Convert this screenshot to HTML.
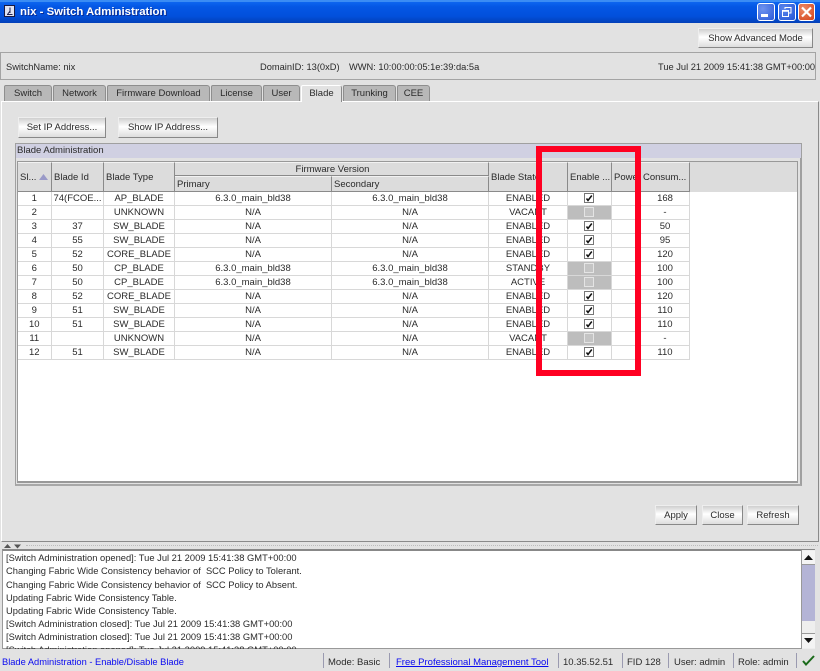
<!DOCTYPE html>
<html><head><meta charset="utf-8"><style>
html,body{margin:0;padding:0}
body{width:820px;height:671px;overflow:hidden;position:relative;background:#e2e2e2;font:9.5px "Liberation Sans",Arial,sans-serif;color:#2a2a2a}
.a{position:absolute;white-space:nowrap;box-sizing:border-box}
.btn{position:absolute;box-sizing:border-box;text-align:center;background:linear-gradient(#cfcfcf,#fff 45%,#ddd);border-top:1px solid #eee;border-left:1px solid #eee;border-right:1px solid #888;border-bottom:1px solid #888;line-height:20px;white-space:nowrap}
.tab{position:absolute;top:85px;height:16px;box-sizing:border-box;background:#b8b8b8;border:1px solid #8e8e8e;border-bottom:0;border-radius:2px 3px 0 0;text-align:center;line-height:16px;white-space:nowrap;color:#2a2a2a}
.tab.on{background:#e2e2e2;border-color:#fff;border-right-color:#888;top:85px;height:17px;z-index:3}
.h{position:absolute;box-sizing:border-box;background:#dcdcdc;border-right:1px solid #8a8a8a;border-bottom:1px solid #8a8a8a;border-top:1px solid #f2f2f2;padding-left:2px;white-space:nowrap;overflow:hidden}
table{position:absolute;left:17.500px;top:191.500px;border-collapse:collapse;table-layout:fixed;width:672px;background:#fff}
td{padding:1px 0 0;border-right:1px solid #d8d8d8;border-bottom:1px solid #d8d8d8;text-align:center;line-height:12px;white-space:nowrap;overflow:hidden;color:#2a2a2a;vertical-align:top}
tr{height:14px}
td.g{background:#bdbdbd}
.c{display:block;width:10px;height:10px;margin:0 auto;box-sizing:border-box;border:1px solid #777;background:#fff;position:relative;left:-1px}
.c svg{position:absolute;left:0;top:0}
.g .c{background:#c4c4c4;border-color:#e4e4e4}
.log{position:absolute;left:6px;white-space:nowrap;line-height:13px;color:#2a2a2a;font-size:9.35px}
.st{position:absolute;top:656px;white-space:nowrap;line-height:13px}
.sp{position:absolute;top:653px;width:1px;height:15px;background:#9a9ab0}
.i{position:absolute;top:61px;line-height:13px;white-space:nowrap;font-size:9.3px}
</style></head><body>

<div class="a" style="left:0;top:0;width:820px;height:23px;background:linear-gradient(#0a5ae0 0,#0d66f0 8%,#0456e4 30%,#0250dc 70%,#0340b8 100%)"></div>
<div class="a" style="left:0;top:0;width:820px;height:2px;background:#3a8cf4"></div>
<svg class="a" style="left:4px;top:5px" width="12" height="13" viewBox="0 0 12 13"><rect x=".5" y=".5" width="10" height="11" fill="#dfe3f2" stroke="#1a1a40"/><path d="M6 2.500V8M3 9.500H8.500M3.500 9.500L6 6" stroke="#222250" fill="none"/></svg>
<div class="a" style="left:20px;top:5px;font:bold 11.4px/15px 'Liberation Sans',sans-serif;color:#fff;text-shadow:1px 1px 0 #0a2a90">nix - Switch Administration</div>
<div class="a" style="left:757px;top:3px;width:18px;height:18px;background:radial-gradient(circle at 30% 30%,#6f93ef,#2c5ad8);border:1px solid #fff;border-radius:3px"></div>
<div class="a" style="left:761px;top:14px;width:7px;height:3px;background:#fff"></div>
<div class="a" style="left:778px;top:3px;width:18px;height:18px;background:radial-gradient(circle at 30% 30%,#5c86ec,#2455d6);border:1px solid #fff;border-radius:3px"></div>
<svg class="a" style="left:778px;top:3px" width="18" height="18"><path d="M7 6V4.500H13V10H11M4.500 7.500H10.500V13.500H4.500Z M4.500 8.200H10.500" stroke="#fff" fill="none"/></svg>
<div class="a" style="left:798px;top:3px;width:17px;height:18px;background:radial-gradient(circle at 30% 30%,#ec8a66,#d4431a);border:1px solid #fff;border-radius:3px"></div>
<svg class="a" style="left:798px;top:3px" width="17" height="18"><path d="M4 4.500L13 13.500M13 4.500L4 13.500" stroke="#fff" stroke-width="2.200" fill="none"/></svg>

<div class="btn" style="left:698px;top:28px;width:115px;height:20px">Show Advanced Mode</div>

<div class="a" style="left:0;top:52px;width:816px;height:28px;border:1px solid #a4a4a4"></div>
<div class="i" style="left:6px">SwitchName: nix</div>
<div class="i" style="left:260px">DomainID: 13(0xD)</div>
<div class="i" style="left:349px">WWN: 10:00:00:05:1e:39:da:5a</div>
<div class="i" style="left:658px">Tue Jul 21 2009 15:41:38 GMT+00:00</div>

<div class="tab" style="left:4px;width:48px">Switch</div>
<div class="tab" style="left:53px;width:53px">Network</div>
<div class="tab" style="left:107px;width:103px">Firmware Download</div>
<div class="tab" style="left:211px;width:51px">License</div>
<div class="tab" style="left:263px;width:37px">User</div>
<div class="tab on" style="left:301px;width:41px">Blade</div>
<div class="tab" style="left:343px;width:53px">Trunking</div>
<div class="tab" style="left:397px;width:33px">CEE</div>

<div class="a" style="left:1px;top:101px;width:818px;height:441px;border-top:1px solid #fff;border-left:1px solid #fff;border-right:1px solid #8a8a8a;border-bottom:1px solid #8a8a8a"></div>

<div class="btn" style="left:18px;top:117px;width:88px;height:21px">Set IP Address...</div>
<div class="btn" style="left:118px;top:117px;width:100px;height:21px">Show IP Address...</div>

<div class="a" style="left:15px;top:143px;width:787px;height:343px;border:1px solid #a0a0a0;border-right:2px solid #a0a0a0;border-bottom:2px solid #a8a8a8"></div>
<div class="a" style="left:16px;top:144px;width:785px;height:14px;background:#d0d0e2;padding-left:1px;line-height:14px">Blade Administration</div>
<div class="a" style="left:17px;top:161px;width:781px;height:322px;background:#fff;border:1px solid #999;border-width:1px 1px 2px 1px"></div>
<div class="a" style="left:18px;top:162px;width:779px;height:30px;background:#dcdcdc"></div>

<div class="h" style="left:18px;top:162px;width:34px;height:30px;line-height:30px">Sl...<svg style="position:absolute;left:21px;top:11px" width="9" height="6"><path d="M4.500 0L9 6H0Z" fill="#9a9ac8"/></svg></div>
<div class="h" style="left:52px;top:162px;width:52px;height:30px;line-height:30px">Blade Id</div>
<div class="h" style="left:104px;top:162px;width:71px;height:30px;line-height:30px">Blade Type</div>
<div class="h" style="left:175px;top:162px;width:314px;height:14px;line-height:14px;text-align:center">Firmware Version</div>
<div class="h" style="left:175px;top:176px;width:157px;height:16px;line-height:16px">Primary</div>
<div class="h" style="left:332px;top:176px;width:157px;height:16px;line-height:16px">Secondary</div>
<div class="h" style="left:489px;top:162px;width:79px;height:30px;line-height:30px">Blade State</div>
<div class="h" style="left:568px;top:162px;width:44px;height:30px;line-height:30px">Enable ...</div>
<div class="h" style="left:612px;top:162px;width:29px;height:30px;line-height:30px">Power</div>
<div class="h" style="left:641px;top:162px;width:49px;height:30px;line-height:30px">Consum...</div>

<table><colgroup><col style="width:34px"><col style="width:52px"><col style="width:71px"><col style="width:157px"><col style="width:157px"><col style="width:79px"><col style="width:44px"><col style="width:29px"><col style="width:49px"></colgroup>
<tr><td>1</td><td>74(FCOE...</td><td>AP_BLADE</td><td>6.3.0_main_bld38</td><td>6.3.0_main_bld38</td><td>ENABLED</td><td><span class="c"><svg width="8" height="8"><path d="M1.500 4.500L3 6.500L6.800 1.500" stroke="#111" stroke-width="1.500" fill="none"/></svg></span></td><td></td><td>168</td></tr>
<tr><td>2</td><td></td><td>UNKNOWN</td><td>N/A</td><td>N/A</td><td>VACANT</td><td class="g"><span class="c"></span></td><td></td><td>-</td></tr>
<tr><td>3</td><td>37</td><td>SW_BLADE</td><td>N/A</td><td>N/A</td><td>ENABLED</td><td><span class="c"><svg width="8" height="8"><path d="M1.500 4.500L3 6.500L6.800 1.500" stroke="#111" stroke-width="1.500" fill="none"/></svg></span></td><td></td><td>50</td></tr>
<tr><td>4</td><td>55</td><td>SW_BLADE</td><td>N/A</td><td>N/A</td><td>ENABLED</td><td><span class="c"><svg width="8" height="8"><path d="M1.500 4.500L3 6.500L6.800 1.500" stroke="#111" stroke-width="1.500" fill="none"/></svg></span></td><td></td><td>95</td></tr>
<tr><td>5</td><td>52</td><td>CORE_BLADE</td><td>N/A</td><td>N/A</td><td>ENABLED</td><td><span class="c"><svg width="8" height="8"><path d="M1.500 4.500L3 6.500L6.800 1.500" stroke="#111" stroke-width="1.500" fill="none"/></svg></span></td><td></td><td>120</td></tr>
<tr><td>6</td><td>50</td><td>CP_BLADE</td><td>6.3.0_main_bld38</td><td>6.3.0_main_bld38</td><td>STANDBY</td><td class="g"><span class="c"></span></td><td></td><td>100</td></tr>
<tr><td>7</td><td>50</td><td>CP_BLADE</td><td>6.3.0_main_bld38</td><td>6.3.0_main_bld38</td><td>ACTIVE</td><td class="g"><span class="c"></span></td><td></td><td>100</td></tr>
<tr><td>8</td><td>52</td><td>CORE_BLADE</td><td>N/A</td><td>N/A</td><td>ENABLED</td><td><span class="c"><svg width="8" height="8"><path d="M1.500 4.500L3 6.500L6.800 1.500" stroke="#111" stroke-width="1.500" fill="none"/></svg></span></td><td></td><td>120</td></tr>
<tr><td>9</td><td>51</td><td>SW_BLADE</td><td>N/A</td><td>N/A</td><td>ENABLED</td><td><span class="c"><svg width="8" height="8"><path d="M1.500 4.500L3 6.500L6.800 1.500" stroke="#111" stroke-width="1.500" fill="none"/></svg></span></td><td></td><td>110</td></tr>
<tr><td>10</td><td>51</td><td>SW_BLADE</td><td>N/A</td><td>N/A</td><td>ENABLED</td><td><span class="c"><svg width="8" height="8"><path d="M1.500 4.500L3 6.500L6.800 1.500" stroke="#111" stroke-width="1.500" fill="none"/></svg></span></td><td></td><td>110</td></tr>
<tr><td>11</td><td></td><td>UNKNOWN</td><td>N/A</td><td>N/A</td><td>VACANT</td><td class="g"><span class="c"></span></td><td></td><td>-</td></tr>
<tr><td>12</td><td>51</td><td>SW_BLADE</td><td>N/A</td><td>N/A</td><td>ENABLED</td><td><span class="c"><svg width="8" height="8"><path d="M1.500 4.500L3 6.500L6.800 1.500" stroke="#111" stroke-width="1.500" fill="none"/></svg></span></td><td></td><td>110</td></tr>
</table>

<div class="a" style="left:536px;top:146px;width:105px;height:230px;border:6px solid #ff0022;z-index:5"></div>

<div class="btn" style="left:655px;top:505px;width:42px;height:20px">Apply</div>
<div class="btn" style="left:702px;top:505px;width:41px;height:20px">Close</div>
<div class="btn" style="left:747px;top:505px;width:52px;height:20px">Refresh</div>

<svg class="a" style="left:4px;top:544px" width="20" height="5"><path d="M3.500 0L7 4H0ZM10 0.500H17L13.500 4.500Z" fill="#555"/></svg>
<div class="a" style="left:26px;top:545px;width:792px;height:2px;border-top:1px dotted #bbb"></div>

<div class="a" style="left:2px;top:549px;width:813px;height:100px;background:#fff;border:1px solid #999;border-top:2px solid #888;overflow:hidden"></div>
<div class="log" style="top:552px">[Switch Administration opened]: Tue Jul 21 2009 15:41:38 GMT+00:00</div>
<div class="log" style="top:565px">Changing Fabric Wide Consistency behavior of&nbsp; SCC Policy to Tolerant.</div>
<div class="log" style="top:579px">Changing Fabric Wide Consistency behavior of&nbsp; SCC Policy to Absent.</div>
<div class="log" style="top:592px">Updating Fabric Wide Consistency Table.</div>
<div class="log" style="top:605px">Updating Fabric Wide Consistency Table.</div>
<div class="log" style="top:618px">[Switch Administration closed]: Tue Jul 21 2009 15:41:38 GMT+00:00</div>
<div class="log" style="top:631px">[Switch Administration closed]: Tue Jul 21 2009 15:41:38 GMT+00:00</div>
<div class="a" style="left:6px;top:644px;height:5px;overflow:hidden;line-height:13px;font-size:9.35px"><div>[Switch Administration opened]: Tue Jul 21 2009 15:41:38 GMT+00:00</div></div>

<div class="a" style="left:801px;top:550px;width:14px;height:99px;background:#eee;border-left:1px solid #999"></div>
<div class="a" style="left:802px;top:551px;width:13px;height:14px;background:#f4f4f4;border-bottom:1px solid #999"></div>
<svg class="a" style="left:804px;top:555px" width="9" height="6"><path d="M4.500 0L9 5H0Z" fill="#111"/></svg>
<div class="a" style="left:802px;top:565px;width:13px;height:56px;background:#b4b4d6"></div>
<div class="a" style="left:802px;top:633px;width:13px;height:15px;background:#f4f4f4;border-top:1px solid #999"></div>
<svg class="a" style="left:804px;top:638px" width="9" height="6"><path d="M0 0H9L4.500 5Z" fill="#111"/></svg>

<div class="a" style="left:0;top:649px;width:820px;height:22px;background:#e2e2e2"></div>
<div class="st" style="left:2px;color:#0a0af0;font-size:9.3px">Blade Administration - Enable/Disable Blade</div>
<div class="sp" style="left:323px"></div>
<div class="st" style="left:328px">Mode: Basic</div>
<div class="sp" style="left:389px"></div>
<div class="st" style="left:396px;color:#0a0af0;text-decoration:underline">Free Professional Management Tool</div>
<div class="sp" style="left:558px"></div>
<div class="st" style="left:563px">10.35.52.51</div>
<div class="sp" style="left:622px"></div>
<div class="st" style="left:627px">FID 128</div>
<div class="sp" style="left:668px"></div>
<div class="st" style="left:674px">User: admin</div>
<div class="sp" style="left:733px"></div>
<div class="st" style="left:738px">Role: admin</div>
<div class="sp" style="left:796px"></div>
<svg class="a" style="left:802px;top:655px" width="13" height="11"><path d="M1 6L4 9.500L12 1" stroke="#1a6a1a" stroke-width="2" fill="none"/></svg>
</body></html>
